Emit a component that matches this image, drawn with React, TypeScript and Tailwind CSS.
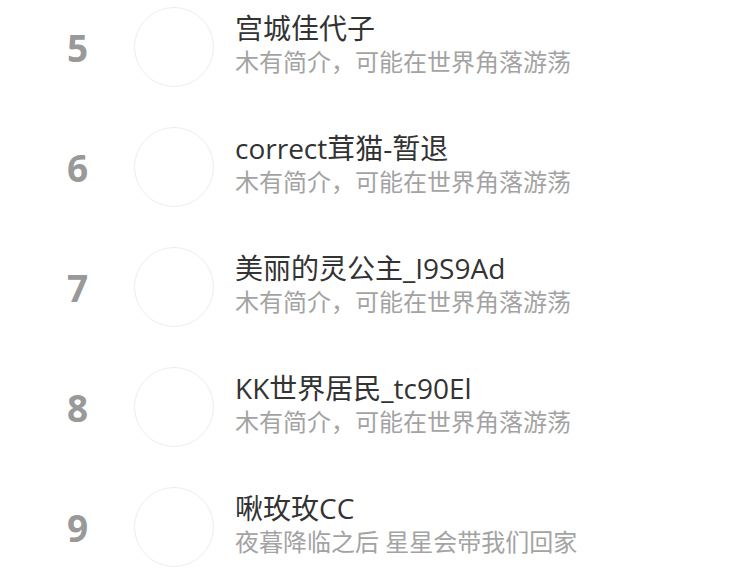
import React from "react";

const rows = [
  { n: 5, name: "宫城佳代子", desc: "木有简介，可能在世界角落游荡" },
  { n: 6, name: "correct茸猫-暂退", desc: "木有简介，可能在世界角落游荡" },
  { n: 7, name: "美丽的灵公主_I9S9Ad", desc: "木有简介，可能在世界角落游荡" },
  { n: 8, name: "KK世界居民_tc90El", desc: "木有简介，可能在世界角落游荡" },
  { n: 9, name: "啾玫玫CC", desc: "夜暮降临之后 星星会带我们回家" },
];

export default function App() {
  return (
    <div
      className="w-[750px] h-[585px] overflow-hidden bg-white"
      style={{ fontFamily: '"Open Sans", "Noto Sans CJK SC", sans-serif' }}
    >
      <div className="-mt-[13px]">
        {rows.map((r) => (
          <div key={r.n} className="flex items-center h-[120px]">
            <div className="w-[134px] pl-[67px] text-[37px] font-bold text-[#999] leading-none">
              {r.n}
            </div>
            <div className="w-[80px] h-[80px] rounded-full border border-[#eeeeee] bg-white shrink-0" />
            <div className="ml-[21px] mb-[6px] flex flex-col gap-[3px]">
              <div className="text-[28px] leading-[32px] text-[#333]">{r.name}</div>
              <div className="text-[24px] leading-[30px] text-[#a3a3a3]">{r.desc}</div>
            </div>
          </div>
        ))}
      </div>
    </div>
  );
}
